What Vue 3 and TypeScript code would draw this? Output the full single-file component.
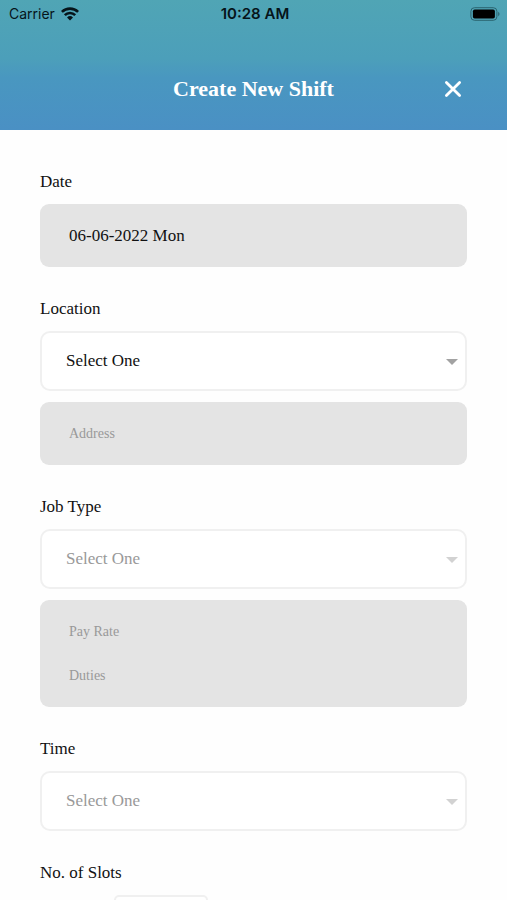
<script setup lang="ts">
import { ref } from 'vue'

const date = ref<string>('06-06-2022 Mon')
const location = ref<string>('')
const address = ref<string>('')
const jobType = ref<string>('')
const payRate = ref<string>('')
const duties = ref<string>('')
const time = ref<string>('')
const slots = ref<string>('')
</script>

<template>
  <div class="screen">
    <header class="header">
      <div class="status">
        <div class="carrier">
          <span>Carrier</span>
          <svg class="wifi" viewBox="0 0 18 14" aria-hidden="true">
            <g fill="none" stroke="#06141a" stroke-width="2.6">
              <path d="M0.9 4.9a11.6 11.6 0 0 1 16.2 0" />
              <path d="M3.8 8.2a7.4 7.4 0 0 1 10.4 0" />
            </g>
            <path d="M6 10.5a4.4 4.4 0 0 1 6 0L9 13.6z" fill="#06141a" />
          </svg>
        </div>
        <span class="clock">10:28 AM</span>
        <svg class="battery" viewBox="0 0 31 14" aria-hidden="true">
          <rect x="0.9" y="0.7" width="26" height="12.6" rx="3.6" fill="none" stroke="#2b6470" stroke-width="1" />
          <rect x="2.9" y="2.5" width="22" height="9" rx="1.8" fill="#000" />
          <path d="M28.2 4.8a2.5 2.5 0 0 1 0 4.4z" fill="#2b6470" />
        </svg>
      </div>
      <div class="bar">
        <h1 class="title">Create New Shift</h1>
        <button class="close" type="button" aria-label="Close">
          <svg viewBox="0 0 18 18" aria-hidden="true">
            <path d="M2.4 2.4l13.2 13.2M15.6 2.4L2.4 15.6" stroke="#fff" stroke-width="2.8" stroke-linecap="round" />
          </svg>
        </button>
      </div>
    </header>

    <form class="form" @submit.prevent>
      <section class="field">
        <label class="label" for="date">Date</label>
        <div class="panel">
          <input id="date" v-model="date" class="value" type="text" readonly />
        </div>
      </section>

      <section class="field">
        <label class="label" for="location">Location</label>
        <div class="picker">
          <select id="location" v-model="location">
            <option value="">Select One</option>
          </select>
          <svg class="caret" viewBox="0 0 12 6" aria-hidden="true"><path d="M0 0h12L6 6z" /></svg>
        </div>
        <div class="panel">
          <input v-model="address" class="note" type="text" placeholder="Address" aria-label="Address" readonly />
        </div>
      </section>

      <section class="field">
        <label class="label" for="job-type">Job Type</label>
        <div class="picker">
          <select id="job-type" v-model="jobType" disabled>
            <option value="">Select One</option>
          </select>
          <svg class="caret" viewBox="0 0 12 6" aria-hidden="true"><path d="M0 0h12L6 6z" /></svg>
        </div>
        <div class="panel">
          <input v-model="payRate" class="note" type="text" placeholder="Pay Rate" aria-label="Pay Rate" readonly />
          <input v-model="duties" class="note" type="text" placeholder="Duties" aria-label="Duties" readonly />
        </div>
      </section>

      <section class="field">
        <label class="label" for="time">Time</label>
        <div class="picker">
          <select id="time" v-model="time" disabled>
            <option value="">Select One</option>
          </select>
          <svg class="caret" viewBox="0 0 12 6" aria-hidden="true"><path d="M0 0h12L6 6z" /></svg>
        </div>
      </section>

      <section class="field">
        <label class="label" for="slots">No. of Slots</label>
        <input id="slots" v-model="slots" class="slots" type="text" inputmode="numeric" />
      </section>
    </form>
  </div>
</template>

<style>
body {
  margin: 0;
  background: #fff;
}
</style>

<style scoped>
.screen,
.screen * {
  box-sizing: border-box;
}

.screen {
  display: flex;
  flex-direction: column;
  height: 100vh;
  font-family: "Liberation Serif", "Times New Roman", serif;
  font-size: 17px;
  line-height: 20px;
  color: #111;
  background: #fefefe;
}

.header {
  flex: none;
  background: linear-gradient(#50a5b5, #4c9fba 45%, #4997c0 60%, #4a90c4);
}

.status {
  display: grid;
  grid-template-columns: 1fr auto 1fr;
  align-items: center;
  padding: 3px 6px 4px 9px;
  font-family: Inter, "Liberation Sans", sans-serif;
  font-size: 15px;
  line-height: 21px;
  color: #06141a;
}

.carrier {
  display: flex;
  align-items: center;
  gap: 6px;
  font-size: 14px;
}

.wifi {
  width: 18px;
  height: 14px;
}

.clock {
  font-weight: 600;
}

.battery {
  justify-self: end;
  width: 31px;
  height: 14px;
}

.bar {
  display: grid;
  grid-template-columns: 1fr auto 1fr;
  align-items: center;
  padding: 44px 40px 24px;
}

.title {
  grid-column: 2;
  margin: 0;
  font-size: 22px;
  line-height: 34px;
  font-weight: 700;
  color: #fff;
}

.close {
  display: flex;
  justify-self: end;
  padding: 5px;
  border: 0;
  background: none;
  cursor: pointer;
}

.close svg {
  width: 18px;
  height: 18px;
}

.form {
  display: flex;
  flex: 1;
  flex-direction: column;
  gap: 32px;
  min-height: 0;
  padding: 42px 40px 0;
  overflow-y: auto;
  scrollbar-width: none;
}

.field {
  display: flex;
  flex: none;
  flex-direction: column;
}

.label {
  margin-bottom: 12px;
}

.panel {
  display: flex;
  flex-direction: column;
  gap: 24px;
  padding: 22px 29px 21px;
  border-radius: 9px;
  background: #e4e4e4;
}

.panel input {
  width: 100%;
  height: 20px;
  padding: 0;
  border: 0;
  outline: 0;
  background: none;
  font: inherit;
  color: inherit;
}

.panel .note {
  font-size: 14px;
}

.note::placeholder {
  color: #999;
}

.picker {
  position: relative;
}

.picker + .panel {
  margin-top: 11px;
}

.picker select {
  display: block;
  width: 100%;
  height: 60px;
  padding: 0 40px 0 24px;
  border: 2px solid #f0f0f0;
  border-radius: 10px;
  appearance: none;
  background: #fff;
  font: inherit;
  color: inherit;
  opacity: 1;
}

.picker select:disabled {
  color: #999;
}

.caret {
  position: absolute;
  top: 28px;
  right: 9px;
  width: 12px;
  height: 6px;
  fill: #a2a2a2;
  pointer-events: none;
}

select:disabled + .caret {
  fill: #d2d2d2;
}

.slots {
  width: 94px;
  height: 60px;
  margin-left: 74px;
  border: 2px solid #f0f0f0;
  border-radius: 5px;
  background: #fff;
  font: inherit;
  text-align: center;
}
</style>
